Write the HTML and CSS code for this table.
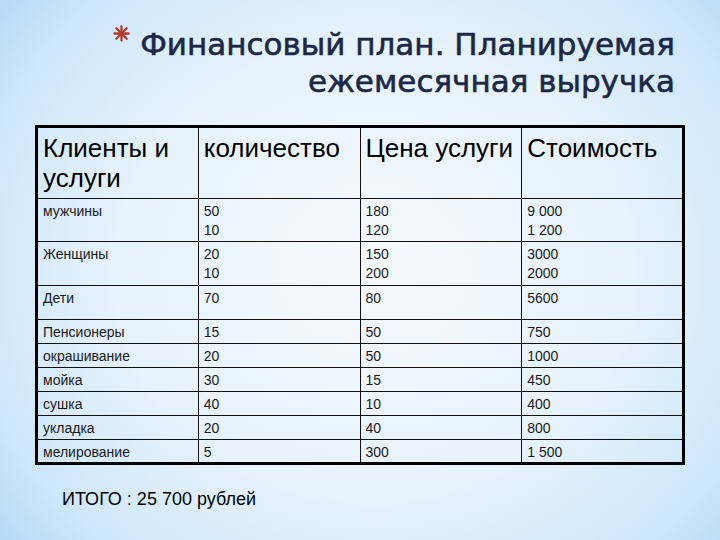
FILE: index.html
```html
<!DOCTYPE html>
<html lang="ru">
<head>
<meta charset="utf-8">
<link rel="stylesheet" href="styles.css">
</head>
<body>
<div class="slide">
  <h1 class="title">
    <span class="line"><svg class="star" viewBox="0 0 18 18" width="17" height="17"><g stroke="#b33a2c" stroke-width="2.4" stroke-linecap="round"><line x1="9" y1="1.5" x2="9" y2="16.5"/><line x1="1.5" y1="9" x2="16.5" y2="9"/><line x1="3.5" y1="3.5" x2="14.5" y2="14.5"/><line x1="14.5" y1="3.5" x2="3.5" y2="14.5"/></g></svg>Финансовый план. Планируемая</span>
    <span class="line">ежемесячная выручка</span>
  </h1>
  <table class="plan">
    <colgroup><col class="c"><col class="c"><col class="c"><col class="c"></colgroup>
    <thead>
      <tr class="head"><th>Клиенты и услуги</th><th>количество</th><th>Цена услуги</th><th>Стоимость</th></tr>
    </thead>
    <tbody>
      <tr class="r2"><td>мужчины</td><td>50<br>10</td><td>180<br>120</td><td>9 000<br>1 200</td></tr>
      <tr class="r2b"><td>Женщины</td><td>20<br>10</td><td>150<br>200</td><td>3000<br>2000</td></tr>
      <tr class="r3"><td>Дети</td><td>70</td><td>80</td><td>5600</td></tr>
      <tr class="r1"><td>Пенсионеры</td><td>15</td><td>50</td><td>750</td></tr>
      <tr class="r1"><td>окрашивание</td><td>20</td><td>50</td><td>1000</td></tr>
      <tr class="r1"><td>мойка</td><td>30</td><td>15</td><td>450</td></tr>
      <tr class="r1"><td>сушка</td><td>40</td><td>10</td><td>400</td></tr>
      <tr class="r1"><td>укладка</td><td>20</td><td>40</td><td>800</td></tr>
      <tr class="r1"><td>мелирование</td><td>5</td><td>300</td><td>1 500</td></tr>
    </tbody>
  </table>
  <p class="total">ИТОГО : 25 700 рублей</p>
</div>
</body>
</html>
```
FILE: styles.css
```css
html, body {
  margin: 0;
  padding: 0;
}
body {
  width: 720px;
  height: 540px;
  overflow: hidden;
  background: radial-gradient(ellipse 72% 85% at 52% 50%, #f5fafe 0%, #e6f2fc 50%, #cfe7fa 78%, #a9d5f5 100%);
  font-family: "Liberation Sans", Arial, sans-serif;
}
.slide {
  width: 720px;
  height: 540px;
  display: flex;
  flex-direction: column;
}
.title {
  margin: 0;
  padding: 26px 45px 0 0;
  font-family: "DejaVu Sans", Verdana, sans-serif;
  font-weight: normal;
  font-size: 31px;
  line-height: 37px;
  color: #1b2847;
  -webkit-text-stroke: 0.6px #1b2847;
  text-align: right;
  display: flex;
  flex-direction: column;
  align-items: flex-end;
}
.line {
  display: block;
  height: 37px;
  white-space: nowrap;
}
.star {
  vertical-align: 13px;
  margin-top: -8px;
  margin-right: 10px;
}
.plan {
  margin: 25px 0 0 35px;
  width: 650px;
  table-layout: fixed;
  border-collapse: collapse;
  border: 3px solid #000;
  color: #1a1a1a;
}
.c {
  width: 25%;
}
.plan th, .plan td {
  border: 1px solid #111;
  text-align: left;
  vertical-align: top;
  padding: 3px 5px 0 5px;
}
.plan th {
  font-weight: normal;
  font-size: 26px;
  line-height: 30px;
  color: #000;
  padding-top: 5px;
}
.plan td {
  font-size: 14px;
  line-height: 19px;
}
.head { height: 72px; }
.r2 { height: 43px; }
.r2b { height: 44px; }
.r3 { height: 34px; }
.r1 { height: 24px; }
.total {
  margin: 23px 0 0 62px;
  font-size: 18px;
  line-height: 22px;
  color: #000;
}
```
